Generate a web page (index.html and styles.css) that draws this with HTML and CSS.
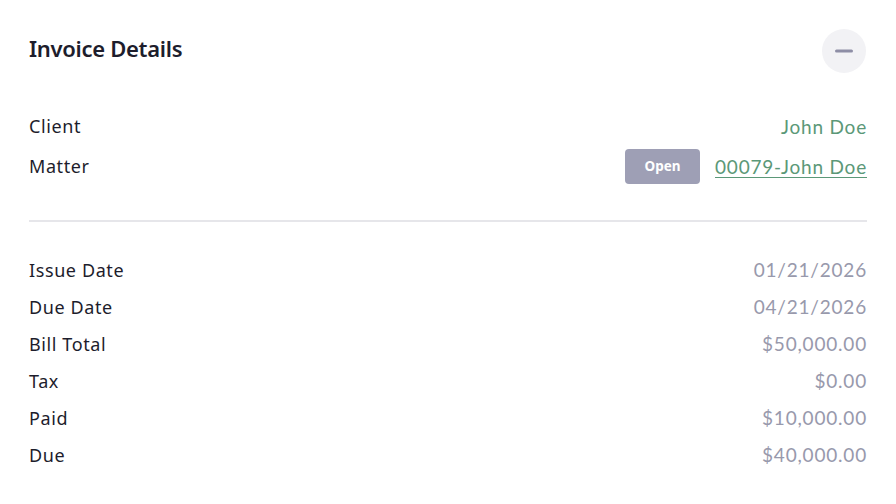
FILE: index.html
```html
<!DOCTYPE html>
<html>
<head>
<meta charset="utf-8">
<link rel="stylesheet" href="styles.css">
</head>
<body>
<div class="card">
  <div class="header">
    <h2 class="title">Invoice Details</h2>
    <button class="collapse" aria-label="Collapse">
      <svg width="18" height="4" viewBox="0 0 18 4"><rect x="0" y="0.5" width="18" height="3" rx="1.5" fill="#8e8ea6"/></svg>
    </button>
  </div>
  <div class="section top">
    <div class="row tall"><span class="label">Client</span><span class="link">John Doe</span></div>
    <div class="row tall"><span class="label">Matter</span>
      <span class="matter"><span class="badge">Open</span><a class="link under" href="#">00079-John Doe</a></span>
    </div>
  </div>
  <div class="divider"></div>
  <div class="section">
    <div class="row"><span class="label">Issue Date</span><span class="value">01/21/2026</span></div>
    <div class="row"><span class="label">Due Date</span><span class="value">04/21/2026</span></div>
    <div class="row"><span class="label">Bill Total</span><span class="value">$50,000.00</span></div>
    <div class="row"><span class="label">Tax</span><span class="value">$0.00</span></div>
    <div class="row"><span class="label">Paid</span><span class="value">$10,000.00</span></div>
    <div class="row"><span class="label">Due</span><span class="value">$40,000.00</span></div>
  </div>
</div>
</body>
</html>
```
FILE: styles.css
```css
html, body { margin: 0; padding: 0; background: #fff; }
.card {
  padding: 29px 29px 0 29px;
  font-family: "Noto Sans", "Liberation Sans", sans-serif;
  color: #1d1d2c;
}
.header {
  display: flex;
  justify-content: space-between;
  align-items: center;
  height: 44px;
}
.title {
  margin: 0;
  margin-top: -6px;
  font-size: 22px;
  font-weight: 600;
  letter-spacing: -0.3px;
  color: #1d1d2c;
}
.collapse {
  width: 44px;
  height: 44px;
  margin-right: 1px;
  border: none;
  border-radius: 50%;
  background: #f2f2f5;
  display: flex;
  align-items: center;
  justify-content: center;
  padding: 0;
}
.section.top { margin-top: 33px; }
.row {
  display: flex;
  justify-content: space-between;
  align-items: center;
  height: 37px;
}
.row.tall { height: 40px; }
.label { font-size: 18px; letter-spacing: 0.6px; color: #1d1d2c; }
.value {
  font-family: "Lato", sans-serif;
  font-size: 19px;
  letter-spacing: 0.8px;
  color: #9899ac;
}
.link {
  font-family: "Lato", sans-serif;
  font-size: 19px;
  letter-spacing: 0.8px;
  color: #5b9878;
  text-decoration: none;
}
.link.under { text-decoration: underline; text-underline-offset: 3px; }
.matter { display: flex; align-items: center; gap: 15px; }
.badge {
  width: 75px;
  height: 35px;
  border-radius: 4px;
  background: #9e9fb5;
  color: #fff;
  font-size: 13.5px;
  font-weight: 700;
  display: flex;
  align-items: center;
  justify-content: center;
}
.divider {
  height: 2px;
  background: #e6e6ea;
  margin: 34px 0 29px;
}
```
